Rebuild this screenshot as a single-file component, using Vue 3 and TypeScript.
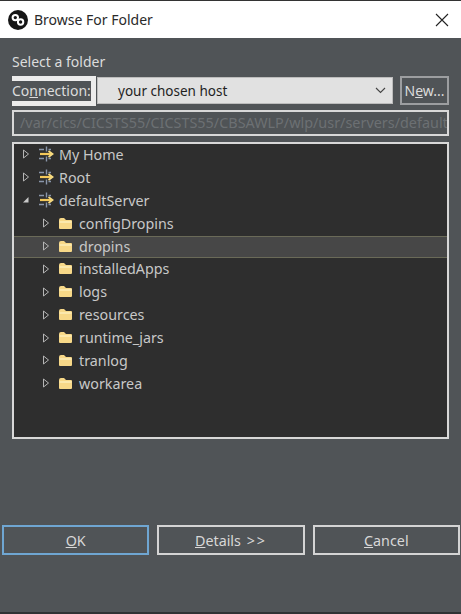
<script setup lang="ts">
interface TreeRow {
  label: string
  depth: number
  open?: boolean
  kind: 'connection' | 'folder'
  selected?: boolean
}

const rows: TreeRow[] = [
  { label: 'My Home', depth: 0, kind: 'connection' },
  { label: 'Root', depth: 0, kind: 'connection' },
  { label: 'defaultServer', depth: 0, open: true, kind: 'connection' },
  { label: 'configDropins', depth: 1, kind: 'folder' },
  { label: 'dropins', depth: 1, kind: 'folder', selected: true },
  { label: 'installedApps', depth: 1, kind: 'folder' },
  { label: 'logs', depth: 1, kind: 'folder' },
  { label: 'resources', depth: 1, kind: 'folder' },
  { label: 'runtime_jars', depth: 1, kind: 'folder' },
  { label: 'tranlog', depth: 1, kind: 'folder' },
  { label: 'workarea', depth: 1, kind: 'folder' }
]
</script>

<template>
  <div class="dialog">
    <header class="titlebar">
      <svg class="app-icon" width="20" height="20" viewBox="0 0 20 20">
        <circle cx="10" cy="10" r="10" fill="#161616" />
        <circle cx="7.3" cy="7.6" r="2.7" fill="none" stroke="#fff" stroke-width="2" />
        <circle cx="12.6" cy="12" r="2.7" fill="none" stroke="#fff" stroke-width="2" />
      </svg>
      <span class="title">Browse For Folder</span>
      <svg class="close" width="14" height="14" viewBox="0 0 14 14">
        <path d="M1 1 L13 13 M13 1 L1 13" stroke="#222" stroke-width="1.1" fill="none" />
      </svg>
    </header>

    <main class="body">
      <div class="prompt">Select a folder</div>

      <div class="connection">
        <div class="conn-frame">
          <label class="conn-label">Co<u>n</u>nection:</label>
        </div>
        <div class="combo">
          <span>your chosen host</span>
          <svg width="11" height="7" viewBox="0 0 11 7">
            <path d="M1 1 L5.5 5.5 L10 1" stroke="#444" stroke-width="1.1" fill="none" />
          </svg>
        </div>
        <button class="new-btn">N<u>e</u>w...</button>
      </div>

      <div class="path">/var/cics/CICSTS55/CICSTS55/CBSAWLP/wlp/usr/servers/default</div>

      <div class="tree">
        <div
          v-for="row in rows"
          :key="row.label"
          class="row"
          :class="{ selected: row.selected, nested: row.depth > 0 }"
        >
          <svg class="twisty" width="8" height="10" viewBox="0 0 8 10">
            <path v-if="row.open" d="M1 7.5 L6.5 7.5 L6.5 2 Z" fill="#c9c9c9" />
            <path v-else d="M1.5 1 L6.5 5 L1.5 9 Z" fill="none" stroke="#b5b5b5" stroke-width="1" />
          </svg>
          <svg v-if="row.kind === 'connection'" class="icon" width="16" height="16" viewBox="0 0 16 16">
            <path d="M1 3.5 H6 M8.5 0.5 V5.5 M10.5 3.5 H13 M1 12.5 H6 M8.5 10.5 V15.5 M10.5 12.5 H13" stroke="#8a96aa" stroke-width="1.4" fill="none" />
            <path d="M2 8 H13" stroke="#f4c95a" stroke-width="2.2" fill="none" />
            <path d="M10.5 5 L14.5 8 L10.5 11" stroke="#f8dc82" stroke-width="1.8" fill="none" />
          </svg>
          <svg v-else class="icon folder" width="15" height="13" viewBox="0 0 15 13">
            <path d="M1 3 Q1 1 3 1 H6 L8 3 H13 Q14 3 14 4 V11 Q14 12 13 12 H2 Q1 12 1 11 Z" fill="#f7d888" />
            <path d="M1.5 5 H13.5" stroke="#fdeeb9" stroke-width="1.5" />
          </svg>
          <span class="label">{{ row.label }}</span>
        </div>
      </div>

      <div class="spacer"></div>

      <footer class="actions">
        <button class="action primary"><u>O</u>K</button>
        <button class="action"><u>D</u>etails <span class="chevrons">&gt;&gt;</span></button>
        <button class="action"><u>C</u>ancel</button>
      </footer>
    </main>
  </div>
</template>

<style>
html,
body {
  margin: 0;
  background: #505457;
  overflow: hidden;
}
</style>

<style scoped>
.dialog {
  width: 461px;
  height: 614px;
  display: flex;
  flex-direction: column;
  font-family: "Noto Sans", "Open Sans", sans-serif;
  border-top: 1px solid #333;
  border-bottom: 2px solid #2f3133;
  box-sizing: border-box;
}

.titlebar {
  height: 37px;
  flex: none;
  background: #fff;
  display: flex;
  align-items: center;
  padding: 0 12px 0 8px;
  gap: 6px;
  color: #2a2a2a;
  font-size: 14px;
}

.title {
  flex: 1;
}

.body {
  flex: 1;
  display: flex;
  flex-direction: column;
  background: #505457;
  padding: 14px 1px 0 12px;
}

.prompt {
  color: #dcdcdc;
  font-size: 14px;
  line-height: 20px;
  margin-bottom: 4px;
}

.connection {
  display: flex;
  height: 30px;
  margin-right: 11px;
}

.conn-frame {
  width: 84px;
  flex: none;
  background: #ececec;
  padding: 5px 5px 5px 0;
  box-sizing: border-box;
}

.conn-label {
  display: block;
  height: 20px;
  background: #505457;
  color: #dcdcdc;
  font-size: 14px;
  line-height: 19px;
  white-space: nowrap;
}

.combo {
  margin: 1px 0 2px 1px;
  width: 296px;
  flex: none;
  background: #e1e1e1;
  border: 1px solid #bcbcbc;
  box-sizing: border-box;
  display: flex;
  align-items: center;
  justify-content: space-between;
  padding: 0 6px 0 20px;
  color: #1f1f1f;
  font-size: 13.5px;
}

.new-btn {
  margin: 0 0 1px 7px;
  width: 49px;
  flex: none;
  padding: 0;
  background: #505457;
  border: 2px solid #9c9ea0;
  color: #dcdcdc;
  font: inherit;
  font-size: 14px;
  box-sizing: border-box;
}

.path {
  margin: 4px 11px 6px 0;
  height: 26px;
  box-sizing: border-box;
  border: 2px solid #d8d8d8;
  background: #4f5356;
  color: #6c7073;
  font-size: 14.4px;
  line-height: 22px;
  padding-left: 6px;
  white-space: nowrap;
  overflow: hidden;
}

.tree {
  margin: 0 11px 0 0;
  height: 297px;
  box-sizing: border-box;
  border: 2px solid #d8d8d8;
  background: #2e2e2e;
}

.row {
  height: 22.9px;
  display: flex;
  align-items: center;
  color: #c8c8c8;
  font-size: 14.3px;
  padding: 0 0 2px 8px;
  box-sizing: border-box;
}

.row.nested {
  padding-left: 28px;
}

.row.selected {
  background: #474747;
  border-top: 1px solid #6a6a58;
  border-bottom: 1px solid #6a6a58;
}

.twisty {
  flex: none;
  margin-right: 8px;
}

.icon {
  flex: none;
  margin-right: 5px;
}

.icon.folder {
  margin-right: 6px;
}

.spacer {
  flex: 1;
}

.actions {
  display: flex;
  gap: 8px;
  margin: 0 0 57px -10px;
  justify-content: flex-start;
}

.action {
  width: 148px;
  height: 30px;
  padding: 0;
  background: #505457;
  border: 2px solid #d4d4d4;
  color: #d8d8d8;
  font: inherit;
  font-size: 14.3px;
  box-sizing: border-box;
}

.action.primary {
  border-color: #6fa6d2;
}

.chevrons {
  letter-spacing: 2px;
  margin-left: 2px;
}
</style>
